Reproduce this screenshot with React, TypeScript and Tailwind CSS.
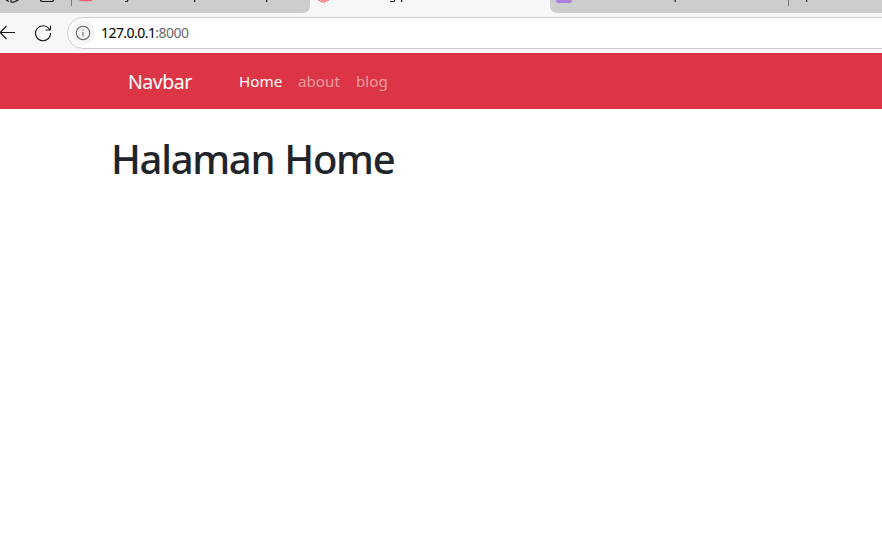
import React from "react";

const ui = "font-['Noto_Sans','Open_Sans',sans-serif]";

function TabStrip() {
  return (
    <div className="h-[13px] w-full bg-[#f7f7f7] flex overflow-hidden shrink-0">
      <svg width="310" height="13" viewBox="0 0 310 13" className="shrink-0">
        <path d="M0 0H310V5Q310 13 302 13H0Z" fill="#cdcdcd" />
        <g fill="none" stroke="#1a1a1a" strokeWidth="1.2">
          <path d="M6 0L9 1.500M11 -1V2L13 2.300L18.500 0" />
          <path d="M40.5 -1V0Q40.5 1.500 43 1.500H51Q53.5 1.500 53.5 0V-1" />
        </g>
        <path d="M71.5 0V6" stroke="#777" />
        <path d="M79 0H93Q92 1.300 90 1.300H82Q80 1.300 79 0Z" fill="#ef5b78" />
        <g fill="#222">
          <path d="M125 1H127V0H128.300V1Q128 2 126.500 2H125Z" />
          <rect x="194" y="0" width="1.300" height="2" />
          <rect x="266" y="0" width="1.300" height="2" />
        </g>
      </svg>
      <svg width="240" height="13" viewBox="0 0 240 13" className="shrink-0">
        <path d="M8 0L13.500 2.500L19 0M11 0L13.500 1L16 0" fill="none" stroke="#fb6a60" />
        <path d="M80 1H84V0H85.200V1Q85 2 83 2H80ZM91 0H92.300V2H91Z" fill="#222" />
      </svg>
      <svg width="332" height="13" viewBox="0 0 332 13" className="shrink-0">
        <path d="M0 0H332V13H8Q0 13 0 5Z" fill="#cdcdcd" />
        <path d="M6 0H22V1Q22 3 20 3H8Q6 3 6 1Z" fill="#ae80dd" />
        <rect x="124.500" y="0" width="1.300" height="2" fill="#222" />
        <path d="M238.500 0V6" stroke="#777" />
        <rect x="256" y="0" width="1.200" height="2" fill="#222" />
      </svg>
    </div>
  );
}

function AddressBar() {
  return (
    <div className="h-[40px] w-full bg-[#f7f7f7] flex items-center shrink-0 overflow-hidden">
      <svg width="66" height="40" viewBox="0 0 66 40" fill="none" stroke="#1a1a1a" strokeWidth="1.150" className="shrink-0">
        <path d="M0 19.500H15M6.500 13L0 19.500L6.500 26" />
        <path d="M49.500 16.500A7.500 7.500 0 1 0 50.500 20M50.500 12.500V17H45.500" />
      </svg>
      <div className="h-[32px] w-[840px] shrink-0 rounded-full border border-[#cecece] bg-white flex items-center pl-[3px] ml-px">
        <div className="size-[24px] rounded-full bg-[#f5f5f5] flex items-center justify-center">
          <svg width="16" height="16" viewBox="0 0 16 16" fill="none" stroke="#6b6b6b" strokeWidth="1.100">
            <circle cx="8" cy="8" r="6.700" />
            <path d="M8 7V11.500M8 4.500V5.800" />
          </svg>
        </div>
        <div className={`${ui} text-[14px] leading-none ml-[6px] text-[#6b6b6b] tracking-[-0.550px]`}>
          <span className="text-black">127.0.0.1</span>:8000
        </div>
      </div>
    </div>
  );
}

export default function App() {
  return (
    <div className={`${ui} w-full h-[541px] bg-white overflow-hidden flex flex-col`}>
      <TabStrip />
      <AddressBar />
      <nav className="h-[56px] shrink-0 bg-[#dc3545] flex items-center pl-32 text-white">
        <span className="w-[64px] pt-0.5 whitespace-nowrap text-[19.500px] tracking-[-0.450px]">Navbar</span>
        <div className="flex ml-[47px] text-[15.200px]">
          <span className="w-[43px] mr-4 whitespace-nowrap">Home</span>
          <span className="w-[42px] mr-4 whitespace-nowrap text-white/50">about</span>
          <span className="whitespace-nowrap text-white/50">blog</span>
        </div>
      </nav>
      <main className="pl-[111px] pt-[26px]">
        <h1 className="text-[40px] leading-[48px] font-medium text-[#212529] tracking-[-1.300px] [word-spacing:1px]">Halaman Home</h1>
      </main>
    </div>
  );
}
